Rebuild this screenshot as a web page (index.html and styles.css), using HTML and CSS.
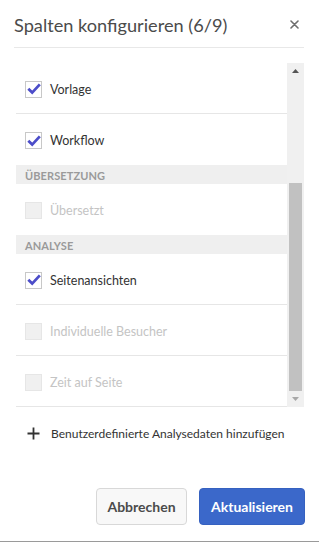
FILE: index.html
```html
<!DOCTYPE html>
<html lang="de">
<head>
<meta charset="utf-8">
<link rel="stylesheet" href="styles.css">
</head>
<body>
<div class="dialog">
  <header class="dlg-head">
    <h1 class="dlg-title">Spalten konfigurieren (6/9)</h1>
    <button class="close" aria-label="Schließen">
      <svg width="9" height="9" viewBox="0 0 9 9"><path d="M1 1L8 8M8 1L1 8" stroke="#6e6e6e" stroke-width="1.6" stroke-linecap="round"/></svg>
    </button>
  </header>
  <div class="scroller">
    <div class="list">
      <div class="row"><span class="cb on"><svg width="14" height="12" viewBox="0 0 14 12"><path d="M1.3 5.8L5.2 9.6L12.8 1.4" fill="none" stroke="#4c4dc9" stroke-width="2.8"/></svg></span><span class="lbl">Vorlage</span></div>
      <div class="row"><span class="cb on"><svg width="14" height="12" viewBox="0 0 14 12"><path d="M1.3 5.8L5.2 9.6L12.8 1.4" fill="none" stroke="#4c4dc9" stroke-width="2.8"/></svg></span><span class="lbl">Workflow</span></div>
      <div class="section">ÜBERSETZUNG</div>
      <div class="row dis"><span class="cb"></span><span class="lbl">Übersetzt</span></div>
      <div class="section">ANALYSE</div>
      <div class="row"><span class="cb on"><svg width="14" height="12" viewBox="0 0 14 12"><path d="M1.3 5.8L5.2 9.6L12.8 1.4" fill="none" stroke="#4c4dc9" stroke-width="2.8"/></svg></span><span class="lbl">Seitenansichten</span></div>
      <div class="row dis"><span class="cb"></span><span class="lbl">Individuelle Besucher</span></div>
      <div class="row dis"><span class="cb"></span><span class="lbl">Zeit auf Seite</span></div>
    </div>
    <div class="sbar">
      <div class="arrow"><svg width="7" height="4" viewBox="0 0 7 4"><path d="M0 4L3.5 0L7 4Z" fill="#555"/></svg></div>
      <div class="track">
        <div class="thumb-gap"></div>
        <div class="thumb"></div>
      </div>
      <div class="arrow"><svg width="7" height="4" viewBox="0 0 7 4"><path d="M0 0L3.5 4L7 0Z" fill="#a8a8a8"/></svg></div>
    </div>
  </div>
  <div class="add">
    <svg width="13" height="13" viewBox="0 0 13 13"><path d="M6.5 0.5V12.5M0.5 6.5H12.5" stroke="#333" stroke-width="1.8"/></svg>
    <span>Benutzerdefinierte Analysedaten hinzufügen</span>
  </div>
  <footer class="actions">
    <button class="btn secondary">Abbrechen</button>
    <button class="btn primary">Aktualisieren</button>
  </footer>
</div>
</body>
</html>
```
FILE: styles.css
```css
* { box-sizing: border-box; }
html, body { margin: 0; padding: 0; background: #fff; }
body { font-family: Lato, "Open Sans", sans-serif; color: #333; }
.dialog {
  width: 319px;
  height: 542px;
  background: #fff;
  border-bottom: 1px solid #9a9a9a;
  display: flex;
  flex-direction: column;
}
.dlg-head {
  margin: 0 15px 0 14px;
  height: 48px;
  border-bottom: 1px solid #e8e8e8;
  display: flex;
  align-items: center;
  justify-content: space-between;
}
.dlg-title {
  margin: 0;
  font-size: 18.2px;
  font-weight: 400;
  color: #4b4b4b;
  padding-top: 2px;
}
.close {
  border: 0;
  background: none;
  padding: 0;
  width: 12px;
  height: 12px;
  display: flex;
  align-items: center;
  justify-content: center;
  margin-right: 4px;
  margin-top: 1px;
}
.scroller {
  margin: 15px 15px 0 16px;
  height: 344px;
  display: flex;
}
.list {
  flex: 1;
  display: flex;
  flex-direction: column;
}
.row {
  height: 51px;
  border-bottom: 1px solid #e6e6e6;
  display: flex;
  align-items: center;
  padding: 2px 0 0 9px;
  font-size: 12.5px;
  color: #333;
}
.row:nth-child(2) { border-bottom: 0; }
.row:nth-child(4) { border-bottom: 0; }
.cb {
  width: 17px;
  height: 17px;
  border: 1px solid #c8c8c8;
  background: #fff;
  display: flex;
  align-items: center;
  justify-content: center;
  margin-right: 8px;
  flex: none;
}
.row.dis .cb { background: #f0f0f0; border-color: #e6e6e6; }
.row.dis .lbl { color: #c4c4c4; }
.section {
  height: 19px;
  background: #efefef;
  font-size: 11px;
  font-weight: 700;
  color: #9a9a9a;
  padding: 1px 0 0 9px;
  display: flex;
  align-items: center;
  letter-spacing: 0.1px;
}
.sbar {
  width: 17px;
  background: #f0f0f0;
  display: flex;
  flex-direction: column;
}
.arrow {
  height: 16px;
  display: flex;
  align-items: center;
  justify-content: center;
}
.track {
  flex: 1;
  display: flex;
  flex-direction: column;
  padding: 0 2px;
}
.thumb-gap { height: 104px; }
.thumb { flex: 1; background: #c1c1c1; }
.add {
  height: 53px;
  display: flex;
  align-items: center;
  padding-left: 27px;
  gap: 11px;
  font-size: 12px;
  color: #333;
}
.actions {
  margin-top: auto;
  padding: 0 14px 16px 0;
  display: flex;
  justify-content: flex-end;
  gap: 12px;
}
.btn {
  height: 37px;
  border-radius: 4px;
  font-family: Lato, "Open Sans", sans-serif;
  font-weight: 700;
  font-size: 14px;
  padding: 0;
}
.secondary {
  width: 91px;
  background: #f8f8f8;
  border: 1px solid #d8d8d8;
  color: #4b4b4b;
}
.primary {
  width: 106px;
  background: #3b68ca;
  border: 1px solid #3661c0;
  color: #fff;
}
```
